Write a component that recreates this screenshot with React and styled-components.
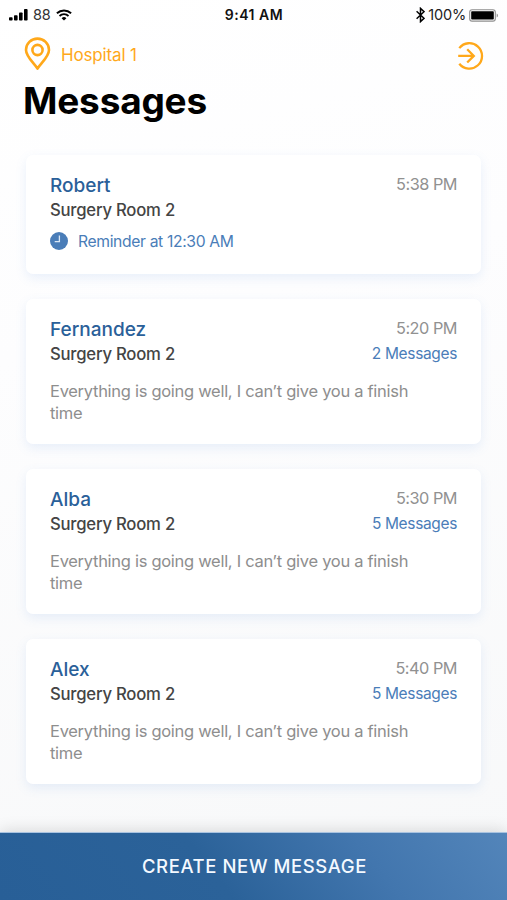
import React from "react";
import styled, { createGlobalStyle } from "styled-components";

const messages = [
  {
    id: 1,
    name: "Robert",
    room: "Surgery Room 2",
    time: "5:38 PM",
    reminder: "Reminder at 12:30 AM",
  },
  {
    id: 2,
    name: "Fernandez",
    room: "Surgery Room 2",
    time: "5:20 PM",
    count: 2,
    text: "Everything is going well, I can’t give you a finish time",
  },
  {
    id: 3,
    name: "Alba",
    room: "Surgery Room 2",
    time: "5:30 PM",
    count: 5,
    text: "Everything is going well, I can’t give you a finish time",
  },
  {
    id: 4,
    name: "Alex",
    room: "Surgery Room 2",
    time: "5:40 PM",
    count: 5,
    text: "Everything is going well, I can’t give you a finish time",
  },
];

const SignalIcon = () => (
  <svg width="19" height="12" viewBox="0 0 19 12">
    <rect x="0" y="8.3" width="3.6" height="3.2" rx="0.8" />
    <rect x="5" y="6.3" width="3.6" height="5.2" rx="0.8" />
    <rect x="10" y="3.5" width="3.6" height="8" rx="0.8" />
    <rect x="15" y="0.1" width="3.6" height="11.4" rx="0.8" />
  </svg>
);

const WifiIcon = () => (
  <svg width="16" height="12" viewBox="0 0 16 12" fill="none" stroke="#000">
    <path d="M0.9 4.3A10.3 10.3 0 0 1 15.1 4.3" strokeWidth="1.9" />
    <path d="M3.5 7A6.5 6.5 0 0 1 12.5 7" strokeWidth="1.8" />
    <path d="M8 11.5L5.6 9.2A3.4 3.4 0 0 1 10.4 9.2Z" fill="#000" stroke="none" />
  </svg>
);

const BluetoothIcon = () => (
  <svg width="9" height="16" viewBox="0 0 9 16" fill="none" stroke="#000" strokeWidth="1.5">
    <path d="M0.6 4.3L8 11.3L4.5 14.6V1.4L8 4.7L0.6 11.7" />
  </svg>
);

const BatteryIcon = () => (
  <svg width="30" height="13" viewBox="0 0 30 13">
    <rect x="0.7" y="0.7" width="25.6" height="11.4" rx="2.4" fill="#fff" stroke="#8e8e8e" strokeWidth="1.1" />
    <rect x="2.2" y="2.2" width="22.6" height="8.4" rx="0.8" />
    <path d="M27.7 4.4C29.4 5 29.4 7.8 27.7 8.4Z" fill="#8e8e8e" />
  </svg>
);

const PinIcon = () => (
  <svg width="27" height="34" viewBox="0 0 27 34" fill="none" stroke="#ffa81a" strokeWidth="2.6">
    <path d="M13.5 31.6C10.7 26.6 2 19.8 2 12.9A11.5 11.3 0 0 1 25 12.9C25 19.8 16.3 26.6 13.5 31.6Z" strokeLinejoin="round" />
    <circle cx="13.5" cy="13" r="5.1" />
  </svg>
);

const ExitIcon = () => (
  <svg width="27" height="30" viewBox="0 0 27 30" fill="none" stroke="#ffa81a" strokeWidth="2.3">
    <path d="M2.3 7.1A12.7 12.7 0 1 1 2.3 22.7" />
    <path d="M1.2 14.9H16.8M10.2 8.3L16.8 14.9L10.2 21.5" />
  </svg>
);

const ClockIcon = () => (
  <svg width="19" height="19" viewBox="0 0 19 19" fill="none">
    <circle cx="9" cy="9" r="9" fill="#4a7db8" />
    <path d="M9.4 3.4V9.7H4.7" stroke="#d9e7f6" strokeWidth="1.3" />
  </svg>
);

const MessageCard = ({ message }) => {
  return (
    <Card $compact={!message.text}>
      <Row>
        <Name>{message.name}</Name>
        <Time>{message.time}</Time>
      </Row>
      <Row>
        <Room>{message.room}</Room>
        {message.count && <Count>{message.count} Messages</Count>}
      </Row>
      {message.reminder && (
        <Reminder>
          <ClockIcon />
          {message.reminder}
        </Reminder>
      )}
      {message.text && <Text>{message.text}</Text>}
    </Card>
  );
};

const App = () => {
  return (
    <Screen>
      <GlobalStyle />
      <StatusBar>
        <StatusLeft>
          <SignalIcon />
          <Carrier>88</Carrier>
          <WifiIcon />
        </StatusLeft>
        <Clock>9:41 AM</Clock>
        <StatusRight>
          <BluetoothIcon />
          <Percent>100%</Percent>
          <BatteryIcon />
        </StatusRight>
      </StatusBar>
      <Header>
        <Location>
          <PinIcon />
          <LocationName>Hospital 1</LocationName>
        </Location>
        <IconButton aria-label="Log out">
          <ExitIcon />
        </IconButton>
      </Header>
      <Title>Messages</Title>
      <List>
        {messages.map((i) => (
          <MessageCard key={i.id} message={i} />
        ))}
      </List>
      <CreateButton>CREATE NEW MESSAGE</CreateButton>
    </Screen>
  );
};

export default App;

const GlobalStyle = createGlobalStyle`
  * {
    box-sizing: border-box;
  }
  body {
    margin: 0;
    font-family: Inter, "Liberation Sans", sans-serif;
  }
  svg {
    display: block;
    flex: none;
  }
`;

const Screen = styled.div`
  height: 900px;
  overflow: hidden;
  display: flex;
  flex-direction: column;
  background: linear-gradient(165deg, #ffffff 0%, #fdfdfe 35%, #f7f8f9 100%);
`;

const StatusBar = styled.div`
  height: 30px;
  padding: 0 8px 0 9px;
  display: grid;
  grid-template-columns: 1fr auto 1fr;
  align-items: center;
  line-height: 30px;
`;

const StatusLeft = styled.div`
  height: 28px;
  display: flex;
  align-items: center;
  gap: 5px;
`;

const StatusRight = styled.div`
  height: 28px;
  display: flex;
  align-items: center;
  justify-content: flex-end;
`;

const Carrier = styled.span`
  width: 18px;
  font-size: 14.5px;
  letter-spacing: -0.3px;
  color: #333;
`;

const Clock = styled.span`
  font-size: 14px;
  font-weight: 600;
  letter-spacing: 0.5px;
  color: #111;
`;

const Percent = styled.span`
  margin: 0 3px 0 3px;
  font-size: 14.5px;
  letter-spacing: -0.2px;
  color: #222;
`;

const Header = styled.div`
  height: 50px;
  padding: 0 23px 0 24px;
  display: flex;
  justify-content: space-between;
  align-items: center;
`;

const Location = styled.div`
  display: flex;
  align-items: center;
  gap: 10px;
  margin-top: -2px;
`;

const LocationName = styled.span`
  margin-top: 2px;
  font-size: 17px;
  letter-spacing: -0.15px;
  color: #ffa81a;
`;

const IconButton = styled.button`
  margin-top: 2px;
  padding: 0;
  border: none;
  background: none;
`;

const Title = styled.h1`
  margin: 0 0 0 23px;
  height: 75px;
  font-size: 37px;
  line-height: 42px;
  font-weight: 700;
  letter-spacing: -0.2px;
  color: #000;
`;

const List = styled.div`
  flex: 1;
  padding: 0 26px;
  display: flex;
  flex-direction: column;
  gap: 25px;
`;

const Card = styled.div`
  height: ${(props) => (props.$compact ? "119px" : "145px")};
  padding: 17px 24px 0;
  border-radius: 7px;
  background: #fff;
  box-shadow: 0 4px 11px rgba(90, 150, 225, 0.13);
`;

const Row = styled.div`
  height: 25px;
  display: flex;
  justify-content: space-between;
  align-items: center;
`;

const Name = styled.div`
  margin-top: 1px;
  font-size: 19px;
  font-weight: 550;
  letter-spacing: 0;
  color: #2a6099;
`;

const Time = styled.div`
  margin-top: -1px;
  font-size: 16.3px;
  letter-spacing: -0.5px;
  color: #919191;
`;

const Room = styled.div`
  font-size: 16.7px;
  font-weight: 450;
  letter-spacing: -0.23px;
  color: #444;
`;

const Count = styled.div`
  font-size: 15.5px;
  letter-spacing: -0.35px;
  color: #4a7db8;
`;

const Reminder = styled.div`
  margin-top: 10px;
  display: flex;
  align-items: center;
  gap: 9px;
  font-size: 15.7px;
  letter-spacing: -0.36px;
  color: #4a7db8;
`;

const Text = styled.p`
  margin: 14px 0 0;
  max-width: 375px;
  font-size: 16.5px;
  line-height: 22px;
  letter-spacing: -0.29px;
  color: #8e8e8e;
`;

const CreateButton = styled.button`
  height: 68px;
  padding: 0 0 2px 2px;
  border: none;
  border-top: 1px solid #a9c3e0;
  background: linear-gradient(52deg, #285f97 0%, #2b6299 42%, #4276ae 72%, #5385ba 100%);
  box-shadow: 0 -2px 14px rgba(0, 0, 0, 0.13);
  font-family: inherit;
  font-size: 18.5px;
  font-weight: 500;
  letter-spacing: 0.6px;
  color: #f4f9ff;
`;
